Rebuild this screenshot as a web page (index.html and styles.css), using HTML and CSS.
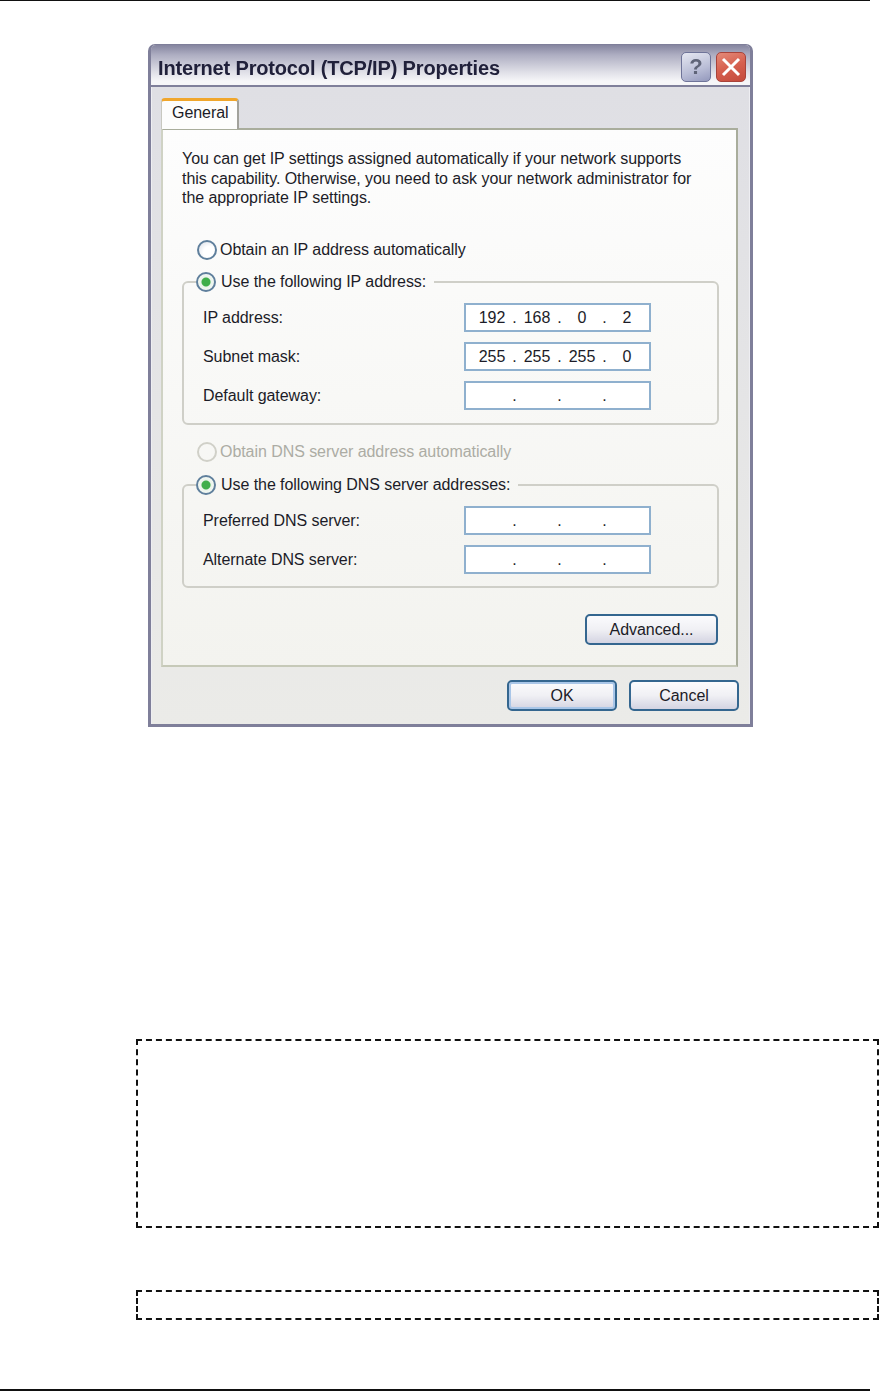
FILE: index.html
```html
<!DOCTYPE html>
<html lang="en">
<head>
    <meta charset="UTF-8">
    <meta name="viewport" content="width=device-width, initial-scale=1.0">
    <title>Internet Protocol (TCP/IP) Properties</title>
    <link rel="stylesheet" href="styles.css">
</head>
<body>
    <div class="page-rule top"></div>

    <div class="dialog">
        <div class="titlebar">
            <span class="title">Internet Protocol (TCP/IP) Properties</span>
            <span class="help-btn">?</span>
            <span class="close-btn">
                <svg width="20" height="20" viewBox="0 0 20 20"><path d="M2 2 L18 18 M18 2 L2 18" stroke="#fff" stroke-width="3" fill="none"/></svg>
            </span>
        </div>

        <div class="client">
            <div class="tabs">
                <div class="tab">General</div>
            </div>

            <div class="panel">
                <p class="intro">You can get IP settings assigned automatically if your network supports<br>this capability. Otherwise, you need to ask your network administrator for<br>the appropriate IP settings.</p>

                <div class="radio-row first">
                    <span class="radio"></span>
                    <span>Obtain an IP address automatically</span>
                </div>

                <fieldset class="group ip-group">
                    <legend class="radio-row">
                        <span class="radio checked"></span>
                        <span>Use the following IP address:</span>
                    </legend>
                    <div class="field-row">
                        <span>IP address:</span>
                        <div class="ip-field">
                            <span class="octet">192</span><span class="dot">.</span><span class="octet">168</span><span class="dot">.</span><span class="octet">0</span><span class="dot">.</span><span class="octet">2</span>
                        </div>
                    </div>
                    <div class="field-row">
                        <span>Subnet mask:</span>
                        <div class="ip-field">
                            <span class="octet">255</span><span class="dot">.</span><span class="octet">255</span><span class="dot">.</span><span class="octet">255</span><span class="dot">.</span><span class="octet">0</span>
                        </div>
                    </div>
                    <div class="field-row">
                        <span>Default gateway:</span>
                        <div class="ip-field">
                            <span class="octet"></span><span class="dot">.</span><span class="octet"></span><span class="dot">.</span><span class="octet"></span><span class="dot">.</span><span class="octet"></span>
                        </div>
                    </div>
                </fieldset>

                <div class="radio-row disabled">
                    <span class="radio"></span>
                    <span>Obtain DNS server address automatically</span>
                </div>

                <fieldset class="group dns-group">
                    <legend class="radio-row">
                        <span class="radio checked"></span>
                        <span>Use the following DNS server addresses:</span>
                    </legend>
                    <div class="field-row">
                        <span>Preferred DNS server:</span>
                        <div class="ip-field">
                            <span class="octet"></span><span class="dot">.</span><span class="octet"></span><span class="dot">.</span><span class="octet"></span><span class="dot">.</span><span class="octet"></span>
                        </div>
                    </div>
                    <div class="field-row">
                        <span>Alternate DNS server:</span>
                        <div class="ip-field">
                            <span class="octet"></span><span class="dot">.</span><span class="octet"></span><span class="dot">.</span><span class="octet"></span><span class="dot">.</span><span class="octet"></span>
                        </div>
                    </div>
                </fieldset>

                <div class="advanced-row">
                    <button class="button advanced">Advanced...</button>
                </div>
            </div>

            <div class="actions">
                <button class="button default">OK</button>
                <button class="button">Cancel</button>
            </div>
        </div>
    </div>

    <div class="note-box tall"></div>
    <div class="note-box short"></div>

    <div class="page-rule bottom"></div>
</body>
</html>
```

FILE: styles.css
```css
* {
    margin: 0;
    padding: 0;
    box-sizing: border-box;
}

html, body {
    height: 1391px;
    overflow: hidden;
}

body {
    font-family: "Liberation Sans", Arial, sans-serif;
    background: white;
}

.page-rule {
    width: 870px;
    height: 2px;
    background: #111;
}

.page-rule.top {
    height: 1px;
}

.page-rule.bottom {
    margin-top: 69px;
}

/* the screenshot was scaled up, so the whole window is a little soft */
.dialog {
    width: 605px;
    height: 683px;
    margin: 43px 0 0 148px;
    border: 3px solid #7f7f9a;
    border-top-width: 1px;
    border-radius: 7px 7px 0 0;
    box-shadow: inset 1px 0 0 #c6c6d2, inset -1px 0 0 #c6c6d2, inset 0 -1px 0 #c6c6d2;
    color: #1c1c28;
    font-size: 16px;
    letter-spacing: -0.06px;
    display: flex;
    flex-direction: column;
    filter: blur(0.35px);
}

.titlebar {
    height: 42px;
    padding: 7px 4px 0 7px;
    display: flex;
    align-items: flex-start;
    background: linear-gradient(180deg, #85859f 0%, #aeaec2 25%, #e2e2e9 70%, #f6f6f8 90%);
    border-bottom: 2px solid #7f7f9a;
    border-radius: 5px 5px 0 0;
}

.title {
    flex: 1;
    font-size: 20px;
    font-weight: bold;
    letter-spacing: -0.16px;
    line-height: 30px;
    margin-top: 1px;
    color: #20203a;
}

.help-btn,
.close-btn {
    width: 30px;
    height: 30px;
    border-radius: 5px;
    display: flex;
    align-items: center;
    justify-content: center;
}

.help-btn {
    margin-right: 5px;
    border: 1px solid #6f7499;
    background: linear-gradient(160deg, #e6e8f2 0%, #b9bdd6 60%, #9398bc 100%);
    color: #5f6478;
    font-size: 22px;
    font-weight: bold;
}

.close-btn {
    border: 1px solid #a8433a;
    background: linear-gradient(160deg, #e48a78 0%, #d65f4e 50%, #c44a3c 100%);
}

.client {
    flex: 1;
    padding: 11px 12px 0 10px;
    background: linear-gradient(180deg, #dfdfe4 0%, #ebebe8 100%);
    box-shadow: inset 1px 0 0 #eeeef2, inset -1px 0 0 #eeeef2;
}

.tabs {
    height: 30px;
    display: flex;
    position: relative;
    z-index: 1;
}

.tab {
    width: 78px;
    height: 31px;
    padding: 2px 0 0 10px;
    line-height: 20px;
    background: #fdfdfd;
    border-top: 3px solid #f0a62c;
    border-left: 1px solid #c8c8c0;
    border-right: 2px solid #a2a29c;
    border-radius: 4px 4px 0 0;
}

.panel {
    height: 539px;
    padding: 19px 17px 0 19px;
    background: linear-gradient(180deg, #fdfdfd 0%, #f3f3ef 100%);
    border: 2px solid #a9ad9c;
    border-left-color: #cfd2c4;
    border-bottom-color: #c6c9b8;
}

.intro {
    line-height: 19.7px;
}

.radio-row {
    display: flex;
    align-items: center;
    gap: 3px;
    height: 20px;
}

.radio-row.first {
    margin: 32px 0 0 15px;
}

.radio-row.disabled {
    margin: 17px 0 0 15px;
    color: #acaca4;
}

.radio-row.disabled .radio {
    border-color: #d0d0c8;
    background: none;
}

.radio {
    width: 20px;
    height: 20px;
    border-radius: 50%;
    border: 2px solid #5f7f9c;
    background: radial-gradient(circle at 65% 65%, #fff 40%, #d8dde6 100%);
    flex: none;
}

.radio.checked {
    background: radial-gradient(circle, #3fae4a 0 4px, #e9f3ea 5px, #fff 100%);
}

.group {
    border: 2px solid #cfcfc8;
    border-radius: 6px;
    padding: 11px 0 0 19px;
    min-width: 0;
}

.group legend {
    margin-left: -7px;
    padding-right: 8px;
    gap: 5px;
}

.ip-group {
    height: 153px;
    margin-top: 12px;
}

.dns-group {
    height: 113px;
    margin-top: 13px;
}

.field-row {
    display: flex;
    align-items: center;
    justify-content: space-between;
    width: 448px;
    height: 29px;
    margin-bottom: 10px;
}

.ip-field {
    width: 187px;
    height: 29px;
    padding: 0 0 0 8px;
    display: flex;
    align-items: center;
    background: white;
    border: 2px solid #8fb0ce;
}

.octet {
    width: 36px;
    text-align: center;
}

.dot {
    width: 9px;
    text-align: center;
}

.advanced-row {
    display: flex;
    justify-content: flex-end;
    margin: 26px 1px 0 0;
}

.button {
    width: 110px;
    height: 31px;
    font-family: inherit;
    font-size: 16px;
    letter-spacing: inherit;
    color: #1c1c28;
    background: linear-gradient(180deg, #fbfbfd 0%, #f0f0f4 50%, #d4d4e2 100%);
    border: 2px solid #34668f;
    border-radius: 5px;
}

.button.advanced {
    width: 133px;
}

.button.default {
    box-shadow: inset 0 0 0 2px #a9c6e8;
}

.actions {
    display: flex;
    justify-content: flex-end;
    gap: 12px;
    margin: 13px -1px 0 0;
}

.note-box {
    width: 743px;
    margin-left: 136px;
    border: 2px dashed #111;
}

.note-box.tall {
    height: 189px;
    margin-top: 312px;
}

.note-box.short {
    height: 30px;
    margin-top: 62px;
}
```
